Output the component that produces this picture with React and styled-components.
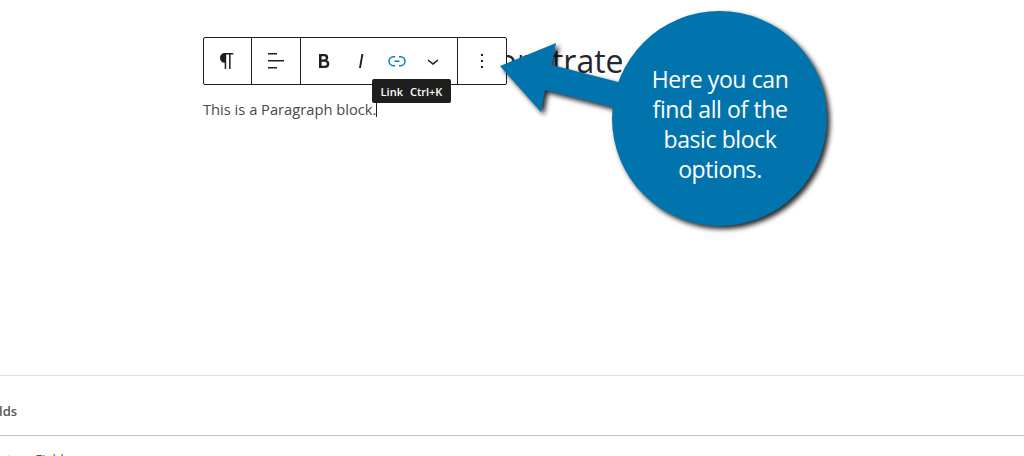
import React from "react";
import styled, { createGlobalStyle } from "styled-components";

const Global = createGlobalStyle`
  html, body { margin: 0; padding: 0; background: #fff; }
  body { font-family: "Open Sans", sans-serif; }
`;
const Page = styled.div`
  position: relative;
  width: 1024px;
  height: 456px;
  overflow: hidden;
  display: flex;
  flex-direction: column;
  background: #fff;
`;
const Canvas = styled.main`
  height: 375px;
  padding: 40px 0 0 203px;
  box-sizing: border-box;
  flex: none;
`;
const Title = styled.h1`
  margin: 0;
  height: 42px;
  font-size: 32px;
  line-height: 42px;
  font-weight: 400;
  color: #23282d;
  white-space: nowrap;
  padding-left: 224px;
`;
const Paragraph = styled.p`
  margin: 17px 0 0;
  font-size: 14.7px;
  line-height: 20px;
  color: #4a4a4a;
  display: flex;
  align-items: center;
`;
const Caret = styled.span`
  display: inline-block;
  width: 1px;
  height: 16px;
  background: #222;
`;
const Panel = styled.section`
  border-top: 1px solid ${(p) => p.$line};
  height: ${(p) => p.$height}px;
  flex: none;
  box-sizing: border-box;
  display: flex;
  align-items: center;
  font-size: 13px;
  font-weight: ${(p) => p.$weight};
  color: #555;
  overflow: hidden;
  white-space: nowrap;
`;
const PanelLabel = styled.span`
  margin-left: ${(p) => p.$shift}px;
  margin-top: ${(p) => p.$top}px;
`;
const Toolbar = styled.div`
  position: absolute;
  left: 203px;
  top: 37px;
  height: 48px;
  display: flex;
  box-sizing: border-box;
  border: 1px solid #1e1e1e;
  border-radius: 2px;
  background: #fff;
`;
const Group = styled.div`
  display: flex;
  align-items: center;
  justify-content: center;
  width: ${(p) => p.$width}px;
  box-sizing: border-box;
  padding-right: ${(p) => p.$inset || 0}px;
  & + & { border-left: 1px solid #1e1e1e; }
`;
const ToolIcon = styled.svg`
  width: 24px;
  height: 24px;
  fill: ${(p) => p.$color || "#1e1e1e"};
  flex: none;
  margin-left: ${(p) => p.$gap || 0}px;
`;
const Tooltip = styled.div`
  position: absolute;
  left: 372px;
  top: 79px;
  width: 79px;
  height: 24px;
  background: #1e1e1e;
  border-radius: 2px;
  color: #fff;
  font-size: 11px;
  font-weight: 600;
  display: flex;
  align-items: center;
  justify-content: center;
  gap: 7px;
`;
const Callout = styled.div`
  position: absolute;
  left: 490px;
  top: 0;
  width: 360px;
  height: 240px;
`;
const CalloutShape = styled.svg`
  position: absolute;
  inset: 0;
  width: 360px;
  height: 240px;
  filter: drop-shadow(3px 3px 2.5px rgba(0, 0, 0, 0.85));
`;
const CalloutText = styled.div`
  position: absolute;
  left: 122px;
  top: 64px;
  width: 216px;
  text-align: center;
  color: #fff;
  font-family: "Open Sans", sans-serif;
  font-size: 23px;
  line-height: 30px;
  letter-spacing: -0.4px;
`;

const Icon = ({ d, color, gap }) => (
  <ToolIcon viewBox="0 0 24 24" $color={color} $gap={gap}>
    <path d={d} />
  </ToolIcon>
);

export default function App() {
  return (
    <Page>
      <Global />
      <Canvas>
        <Title>Demonstrate</Title>
        <Paragraph>
          This is a Paragraph block.
          <Caret />
        </Paragraph>
      </Canvas>
      <Panel $line="#ddd" $height={60} $weight={600}>
        <PanelLabel $shift={-19} $top={11}>Fields</PanelLabel>
      </Panel>
      <Panel $line="#c4c4c4" $height={21} $weight={400}>
        <PanelLabel $shift={-15} $top={26}>Custom Fields</PanelLabel>
      </Panel>
      <Toolbar>
        <Group $width={47} $inset={1}>
          <Icon d="M18.3 4H9.9v-.1l-.9.2c-2.3.4-4 2.4-4 4.8s1.7 4.4 4 4.8l.7.1V20h1.5V5.5h2.9V20h1.5V5.5h2.7V4z" />
        </Group>
        <Group $width={49}>
          <Icon d="M13 5.5H4V4h9v1.5Zm7 7H4V11h16v1.5Zm-7 7H4V18h9v1.5Z" />
        </Group>
        <Group $width={157} $inset={2}>
          <Icon d="M14.7 11.3c1-.6 1.5-1.6 1.5-3 0-2.3-1.3-3.4-4-3.4H7v14h5.8c1.4 0 2.5-.3 3.3-1 .8-.7 1.2-1.7 1.2-2.9.1-1.9-.8-3.1-2.6-3.7zm-5.1-4h2.3c.6 0 1.1.1 1.4.4.3.3.5.7.5 1.2s-.2 1-.5 1.2c-.3.3-.8.4-1.4.4H9.6V7.3zm4.6 9c-.4.3-1 .4-1.7.4H9.6v-3.9h2.9c.7 0 1.3.2 1.7.5.4.3.6.8.6 1.5s-.2 1.2-.6 1.5z" />
          <Icon gap={13} d="M12.5 5L10 19h1.9l2.5-14z" />
          <Icon gap={12} color="#007cba" d="M10 17.389H8.444A5.194 5.194 0 1 1 8.444 7H10v1.5H8.444a3.694 3.694 0 0 0 0 7.389H10v1.5ZM14 7h1.556a5.194 5.194 0 0 1 0 10.39H14v-1.5h1.556a3.694 3.694 0 0 0 0-7.39H14V7Zm-4.5 6h5v-1.5h-5V13Z" />
          <Icon gap={12} d="M17.5 11.6L12 16l-5.5-4.4.9-1.2L12 14l4.5-3.6 1 1.2z" />
        </Group>
        <Group $width={49}>
          <Icon d="M13 19h-2v-2h2v2zm0-6h-2v-2h2v2zm0-6h-2V5h2v2z" />
        </Group>
      </Toolbar>
      <Tooltip>
        <span>Link</span>
        <span>Ctrl+K</span>
      </Tooltip>
      <Callout>
        <CalloutShape viewBox="0 0 360 240">
          <path
            fill="#0274ad"
            d="M10 66 L66 43 L62 65 L132 83 L126 108 L55 90 L51 112 Z"
          />
          <circle cx="229.5" cy="118.5" r="107.5" fill="#0274ad" />
        </CalloutShape>
        <CalloutText>
          Here you can
          <br />
          find all of the
          <br />
          basic block
          <br />
          options.
        </CalloutText>
      </Callout>
    </Page>
  );
}
